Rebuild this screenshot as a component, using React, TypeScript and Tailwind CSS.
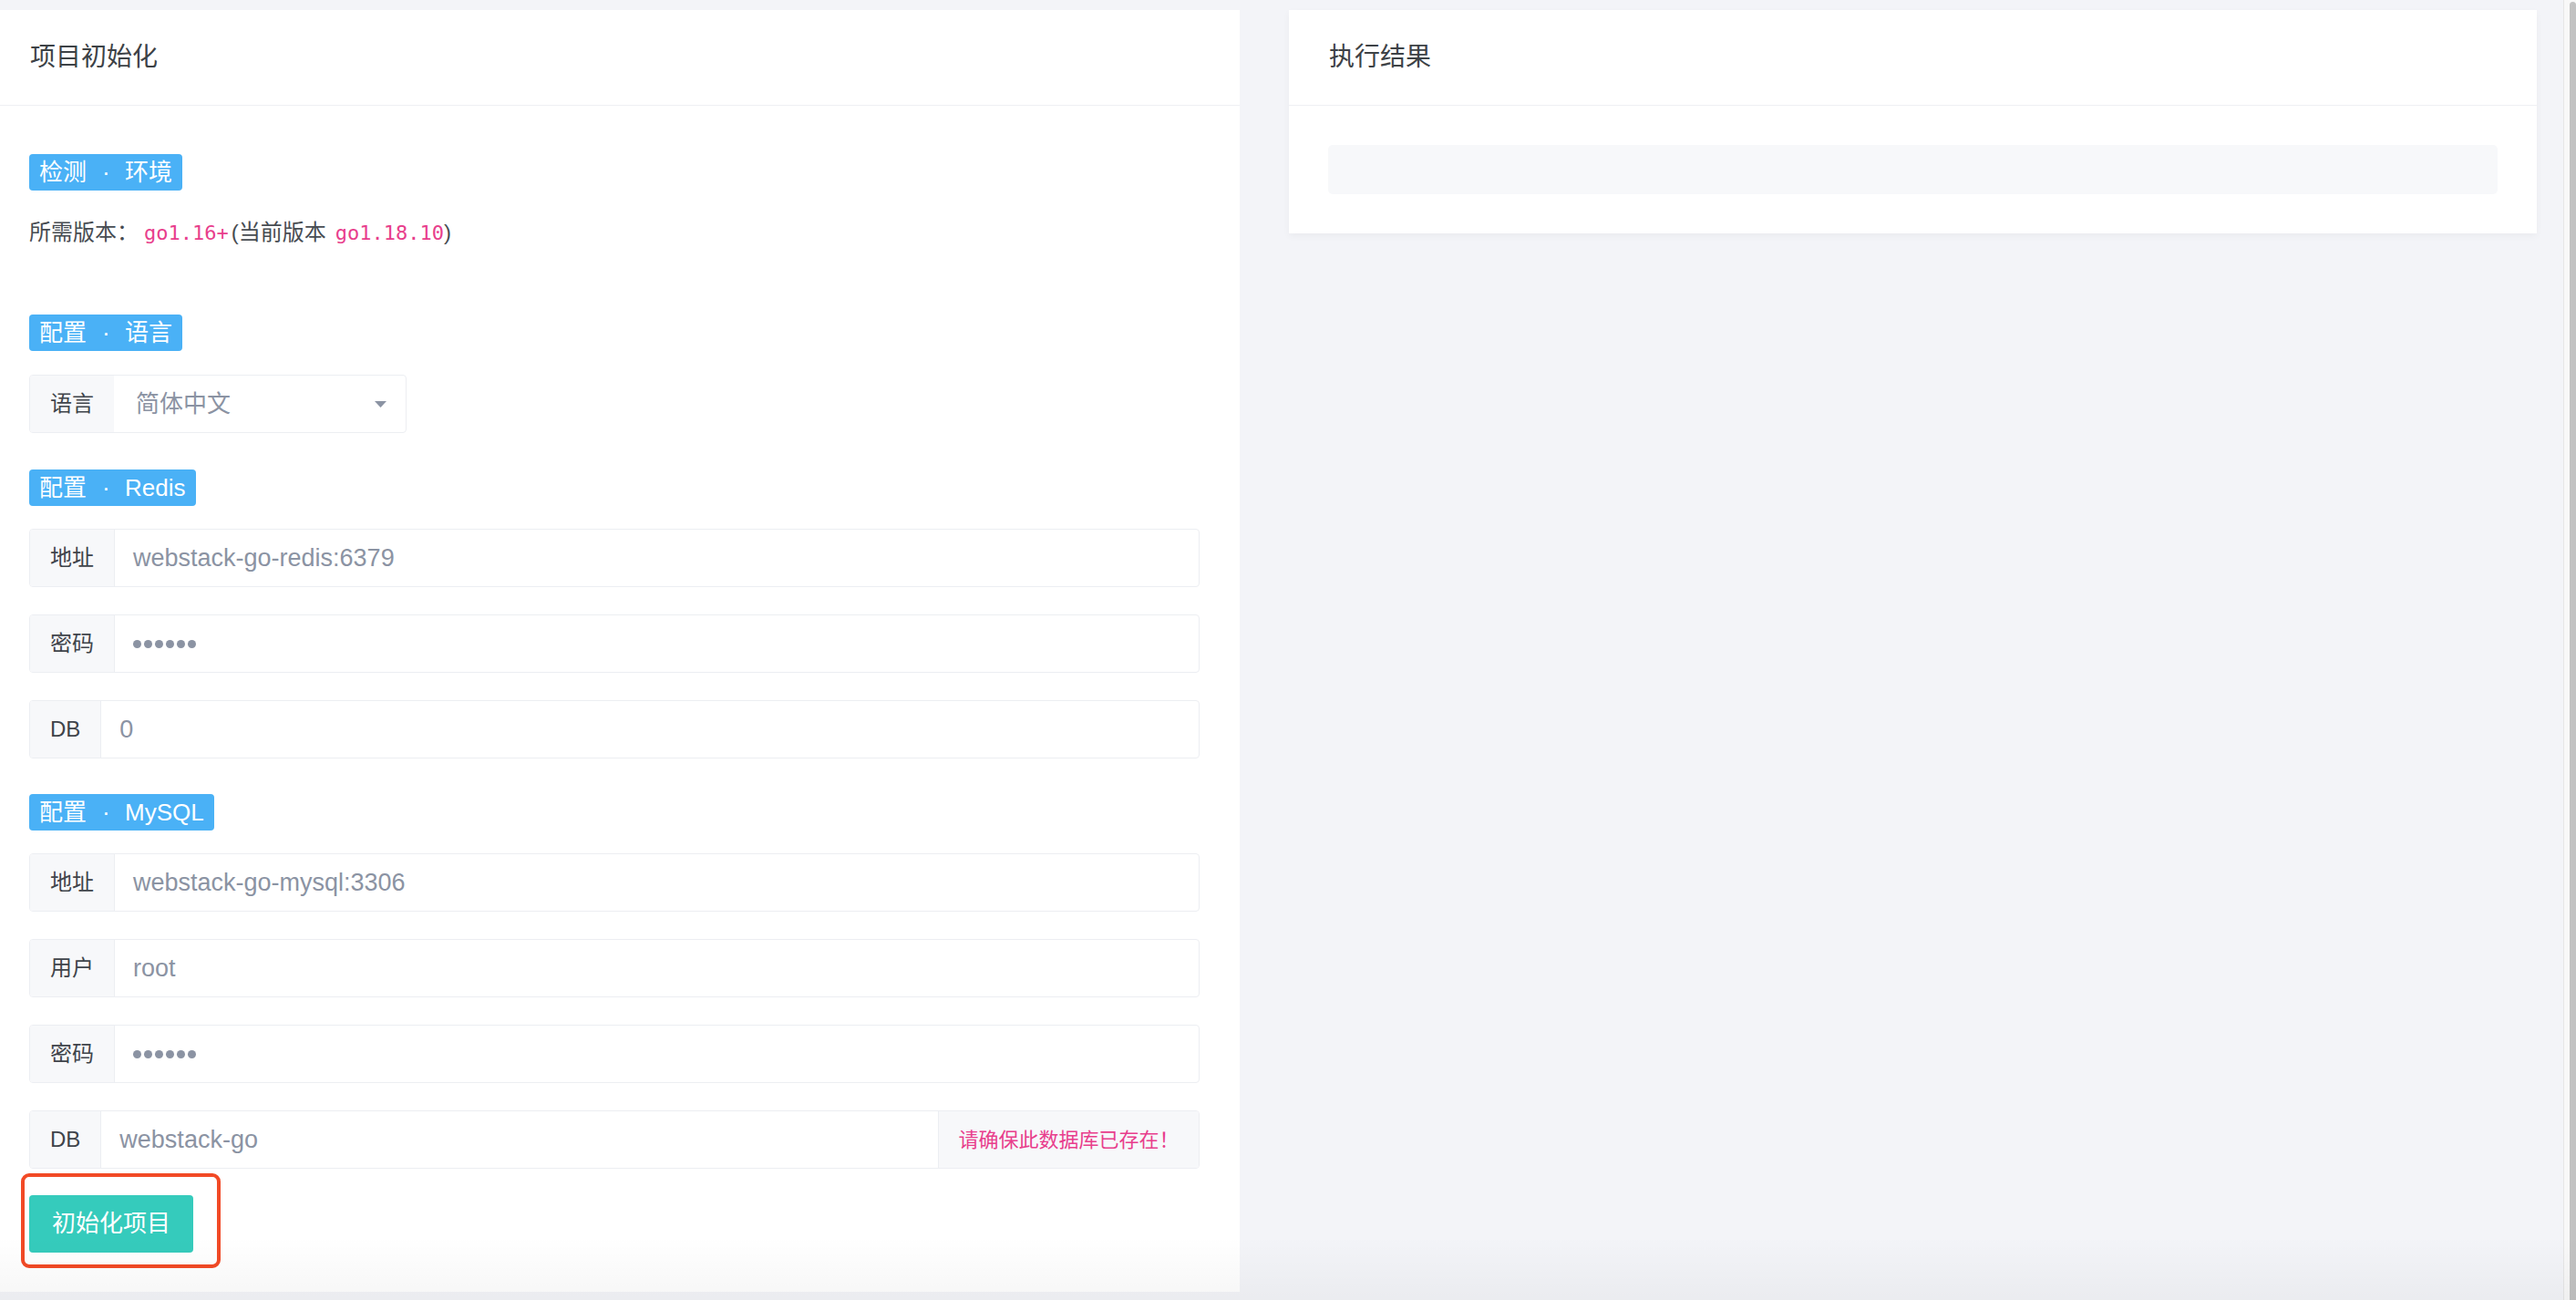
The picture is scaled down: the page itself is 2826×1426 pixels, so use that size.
import React from 'react';

const sans = "font-['Liberation_Sans','Noto_Sans_CJK_SC',sans-serif]";
const mono = "font-['DejaVu_Sans_Mono',monospace]";

const Badge: React.FC<{ left: string; right: string; className?: string }> = ({ left, right, className }) => (
  <div className={`inline-flex h-[40px] items-center gap-[17px] self-start rounded-[4px] bg-[#4ab1f6] px-[11px] text-[26px] text-white ${className ?? ''}`}>
    <span>{left}</span>
    <span className="w-[8px] text-center">·</span>
    <span>{right}</span>
  </div>
);

const Dots = () => (
  <div className="flex items-center gap-[3px]">
    {[0, 1, 2, 3, 4, 5].map((i) => (
      <span key={i} className="h-[9px] w-[9px] rounded-full bg-[#8b93a3]" />
    ))}
  </div>
);

interface GroupProps {
  label: string;
  children: React.ReactNode;
  addon?: string;
  className?: string;
}

const Group: React.FC<GroupProps> = ({ label, children, addon, className }) => (
  <div className={`flex h-[64px] overflow-hidden rounded-[4px] border border-[#eceef2] ${className ?? ''}`}>
    <div className="flex items-center border-r border-[#eceef2] bg-[#f7f8fa] px-[22px] text-[24px] text-[#3f444a]">
      {label}
    </div>
    <div className="flex flex-1 items-center px-[20px] text-[27px] text-[#8b93a3]">{children}</div>
    {addon && (
      <div className="flex w-[286px] items-center justify-center border-l border-[#eceef2] bg-[#f7f8fa] text-[22px] text-[#e83e8c]">
        {addon}
      </div>
    )}
  </div>
);

const CardHeader: React.FC<{ title: string; className?: string }> = ({ title, className }) => (
  <div className={`flex h-[105px] items-center border-b border-[#eef0f3] text-[28px] text-[#3d4246] ${className ?? ''}`}>
    {title}
  </div>
);

export default function App() {
  return (
    <div className={`relative flex h-[1426px] overflow-hidden bg-[#f3f4f8] pt-[11px] ${sans}`}>
      {/* 项目初始化 */}
      <div className="w-[1360px] self-start bg-white">
        <CardHeader title="项目初始化" className="px-[33px]" />
        <div className="flex flex-col pb-[43px] pl-[32px] pr-[44px] pt-[53px]">
          <Badge left="检测" right="环境" />
          <div className="mt-[28px] flex h-[36px] items-center text-[24px] text-[#474c52]">
            <span>所需版本：</span>
            <code className={`ml-[6px] text-[22px] text-[#e83e8c] ${mono}`}>go1.16+</code>
            <span className="ml-[3px]">(当前版本</span>
            <code className={`ml-[10px] text-[22px] text-[#e83e8c] ${mono}`}>go1.18.10</code>
            <span>)</span>
          </div>

          <Badge left="配置" right="语言" className="mt-[72px]" />
          <div className="mt-[26px] flex h-[64px] w-[414px] overflow-hidden rounded-[4px] border border-[#eceef2]">
            <div className="flex items-center bg-[#f7f8fa] px-[22px] text-[24px] text-[#3f444a]">语言</div>
            <div className="flex flex-1 items-center justify-between pl-[24px] pr-[21px] text-[26px] text-[#8b93a3]">
              <span>简体中文</span>
              <svg width="13" height="7" viewBox="0 0 13 7">
                <path d="M0 0h13L6.5 7z" fill="#8b93a3" />
              </svg>
            </div>
          </div>

          <Badge left="配置" right="Redis" className="mt-[40px]" />
          <Group label="地址" className="mt-[25px]">webstack-go-redis:6379</Group>
          <Group label="密码" className="mt-[30px]">
            <Dots />
          </Group>
          <Group label="DB" className="mt-[30px]">0</Group>

          <Badge left="配置" right="MySQL" className="mt-[39px]" />
          <Group label="地址" className="mt-[25px]">webstack-go-mysql:3306</Group>
          <Group label="用户" className="mt-[30px]">root</Group>
          <Group label="密码" className="mt-[30px]">
            <Dots />
          </Group>
          <Group label="DB" addon="请确保此数据库已存在！" className="mt-[30px]">
            webstack-go
          </Group>

          <div className="relative mt-[29px] self-start">
            <button className="h-[63px] w-[180px] rounded-[4px] bg-[#35cbbc] text-[26px] text-white">初始化项目</button>
            <div className="pointer-events-none absolute -left-[9px] -top-[24px] h-[104px] w-[219px] rounded-[9px] border-[4px] border-[#f24a26]" />
          </div>
        </div>
      </div>

      {/* 执行结果 */}
      <div className="ml-[54px] w-[1369px] self-start bg-white shadow-[0_3px_8px_rgba(0,0,0,0.04)]">
        <CardHeader title="执行结果" className="px-[44px]" />
        <div className="p-[43px]">
          <div className="h-[54px] rounded-[5px] bg-[#f7f8fa]" />
        </div>
      </div>

      <div className="ml-[29px] flex w-[14px] justify-end border-l border-[#e6e6e6] bg-[#f8f8f8] -mt-[11px]">
        <div className="mt-[2px] w-[7px] rounded-t-full bg-[#c2c2c2]" />
      </div>

      <div className="pointer-events-none absolute bottom-0 left-0 right-0 h-[70px] bg-gradient-to-b from-transparent to-black/[0.035]" />
    </div>
  );
}
